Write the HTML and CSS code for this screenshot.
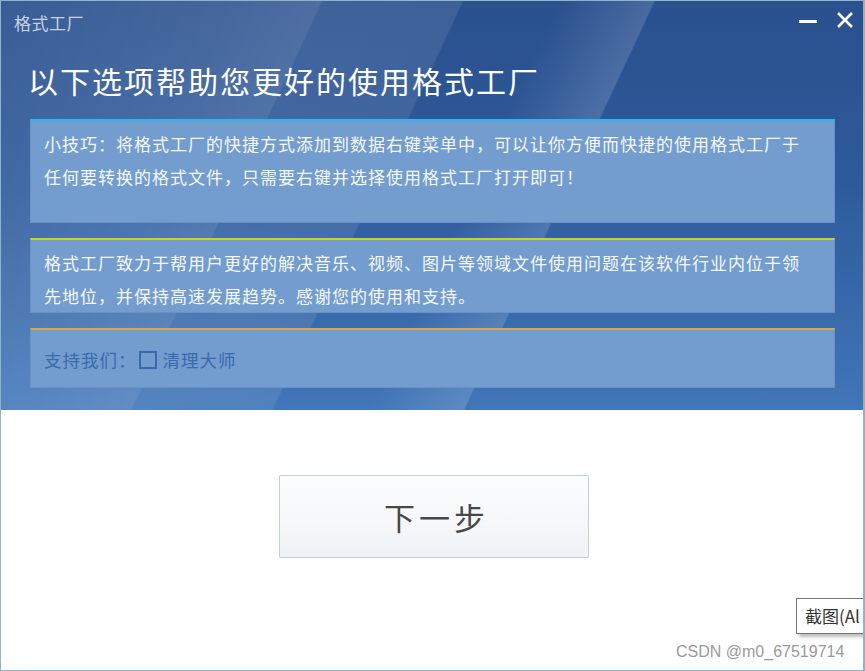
FILE: index.html
```html
<!DOCTYPE html>
<html lang="zh-CN">
<head>
    <meta charset="UTF-8">
    <title>格式工厂</title>
    <link rel="stylesheet" href="styles.css">
</head>
<body>
    <div class="window">
        <div class="header">
            <div class="titlebar">
                <span class="app-title">格式工厂</span>
                <div class="controls">
                    <svg class="ctl" width="20" height="20" viewBox="0 0 20 20">
                        <rect x="1" y="10" width="18" height="3" fill="#fff"/>
                    </svg>
                    <svg class="ctl" width="20" height="20" viewBox="0 0 20 20">
                        <path d="M3 3 L17 17 M17 3 L3 17" stroke="#fff" stroke-width="2.6" fill="none"/>
                    </svg>
                </div>
            </div>
            <h1>以下选项帮助您更好的使用格式工厂</h1>
            <div class="panel panel-tip">
                小技巧：将格式工厂的快捷方式添加到数据右键菜单中，可以让你方便而快捷的使用格式工厂于任何要转换的格式文件，只需要右键并选择使用格式工厂打开即可！
            </div>
            <div class="panel panel-about">
                格式工厂致力于帮用户更好的解决音乐、视频、图片等领域文件使用问题在该软件行业内位于领先地位，并保持高速发展趋势。感谢您的使用和支持。
            </div>
            <div class="panel panel-support">
                <span>支持我们：</span>
                <span class="check"></span>
                <span>清理大师</span>
            </div>
        </div>
        <div class="content">
            <button class="next">下一步</button>
        </div>
        <div class="tooltip">截图(Al</div>
        <div class="watermark">CSDN @m0_67519714</div>
    </div>
</body>
</html>
```

FILE: styles.css
```css
html, body {
    margin: 0;
    padding: 0;
    height: 100%;
    overflow: hidden;
    background-color: #fff;
}
body {
    font-family: "Noto Sans CJK SC", "Liberation Sans", sans-serif;
}
.window {
    position: relative;
    height: 669px;
    border: 1px solid #8cb5c6;
    border-right-width: 2px;
    overflow: hidden;
    background-color: #fff;
}
.header {
    height: 409px;
    padding: 0 0 0 29px;
    box-sizing: content-box;
    background:
        linear-gradient(115deg,
            rgba(255, 255, 255, 0.07) 0%,
            rgba(255, 255, 255, 0.13) 22%,
            rgba(255, 255, 255, 0.17) 30.4%,
            rgba(255, 255, 255, 0.10) 30.6%,
            rgba(255, 255, 255, 0.09) 43.8%,
            rgba(255, 255, 255, 0) 44%,
            rgba(255, 255, 255, 0) 53%,
            rgba(255, 255, 255, 0.15) 62%,
            rgba(255, 255, 255, 0) 62.2%,
            rgba(255, 255, 255, 0) 100%),
        linear-gradient(to bottom, #2a508e 0%, #2e5a9b 45%, #4176b8 100%);
}
.titlebar {
    display: flex;
    justify-content: space-between;
    align-items: center;
    height: 42px;
    margin-left: -16px;
    padding-right: 8px;
}
.app-title {
    font-size: 17px;
    color: #c6d3e6;
    letter-spacing: 0.5px;
}
.controls {
    display: flex;
    gap: 17px;
    margin-top: -4px;
}
h1 {
    margin: 17px 0 19px -2px;
    font-size: 30px;
    font-weight: normal;
    line-height: 40px;
    color: #fff;
    letter-spacing: 2px;
}
.panel {
    width: 805px;
    box-sizing: border-box;
    background-color: #739dcf;
    border: 1px solid #6891c6;
    border-top: 2px solid #2cb6f2;
    padding: 6px 20px 0 13px;
    font-size: 17px;
    line-height: 33px;
    color: #f5f8fc;
    letter-spacing: 1px;
}
.panel-tip {
    height: 104px;
}
.panel-about {
    height: 75px;
    margin-top: 15px;
    border-top-color: #c9d41a;
}
.panel-support {
    height: 60px;
    margin-top: 15px;
    padding-top: 13px;
    border-top-color: #d6aa4c;
    color: #3a69ad;
    font-size: 17.5px;
    display: flex;
    align-items: flex-start;
}
.check {
    display: inline-block;
    width: 14px;
    height: 14px;
    border: 2px solid #3a69ad;
    margin: 8px 6px 0 2px;
}
.content {
    display: flex;
    justify-content: center;
    padding-top: 65px;
}
.next {
    width: 310px;
    height: 83px;
    border: 1px solid #c3cfdd;
    border-radius: 1px;
    background: linear-gradient(to bottom, #fdfdfe 0%, #f5f7fa 60%, #eef1f5 100%);
    font-family: "Noto Sans CJK SC", sans-serif;
    font-size: 31px;
    letter-spacing: 4px;
    color: #484848;
    padding: 0 0 0 6px;
    margin-left: 3px;
}
.tooltip {
    position: absolute;
    left: 795px;
    top: 597px;
    width: 80px;
    padding: 4px 8px 5px 8px;
    border: 1px solid #767676;
    background-color: #fff;
    box-shadow: 3px 3px 3px rgba(0, 0, 0, 0.25);
    font-size: 17px;
    color: #333;
    white-space: nowrap;
}
.watermark {
    position: absolute;
    left: 675px;
    top: 642px;
    font-family: "Liberation Sans", Arial, sans-serif;
    font-size: 16px;
    color: #9a9a9a;
}
```
